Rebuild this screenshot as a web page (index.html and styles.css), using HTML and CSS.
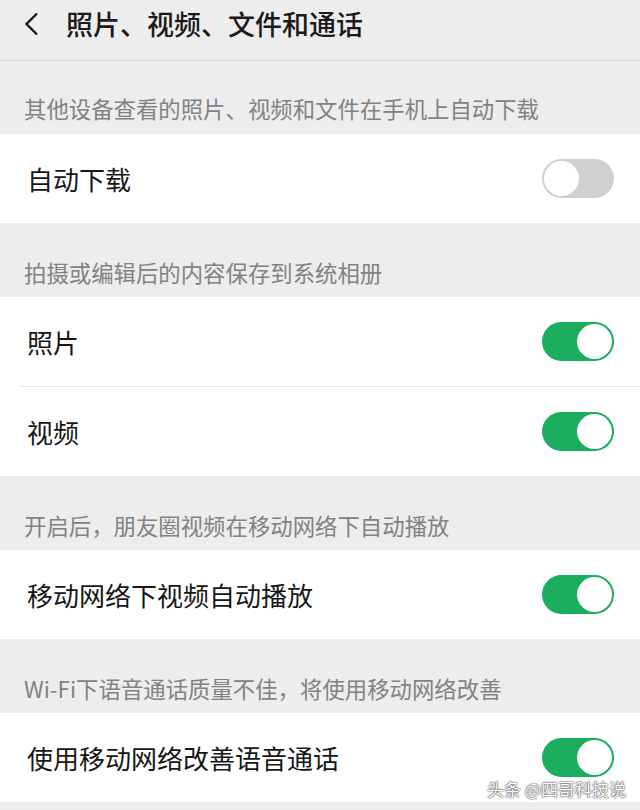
FILE: index.html
```html
<!DOCTYPE html>
<html lang="zh-CN">
  <head>
    <meta charset="UTF-8" />
    <meta name="viewport" content="width=device-width, initial-scale=1.0" />
    <title>照片、视频、文件和通话</title>
    <link rel="stylesheet" href="styles.css">
  </head>
  <body>
    <div class="header">
      <svg class="back" width="16" height="24" viewBox="0 0 16 24">
        <path d="M14 1.5 L3.5 12 L14 22.5" fill="none" stroke="#1a1a1a" stroke-width="2.4" stroke-linejoin="miter" />
      </svg>
      <h1>照片、视频、文件和通话</h1>
    </div>

    <p class="tip">其他设备查看的照片、视频和文件在手机上自动下载</p>
    <div class="group">
      <div class="row">
        <span>自动下载</span>
        <span class="switch"></span>
      </div>
    </div>

    <p class="tip">拍摄或编辑后的内容保存到系统相册</p>
    <div class="group">
      <div class="row">
        <span>照片</span>
        <span class="switch on"></span>
      </div>
      <div class="row">
        <span>视频</span>
        <span class="switch on"></span>
      </div>
    </div>

    <p class="tip">开启后，朋友圈视频在移动网络下自动播放</p>
    <div class="group">
      <div class="row">
        <span>移动网络下视频自动播放</span>
        <span class="switch on"></span>
      </div>
    </div>

    <p class="tip">Wi-Fi下语音通话质量不佳，将使用移动网络改善</p>
    <div class="group">
      <div class="row">
        <span>使用移动网络改善语音通话</span>
        <span class="switch on"></span>
      </div>
    </div>

    <div class="mark">头条 @四哥科技说</div>
  </body>
</html>
```

FILE: styles.css
```css
body {
  margin: 0;
  background: #ededed;
  font-family: "Noto Sans CJK SC", "Noto Sans", sans-serif;
  color: #1a1a1a;
  height: 810px;
  position: relative;
  overflow: hidden;
}
.header {
  height: 61px;
  border-bottom: 1px solid #d9d9d9;
  display: flex;
  align-items: flex-start;
  padding: 8px 0 0 23px;
  box-sizing: border-box;
}
.back {
  margin-top: 4px;
}
h1 {
  margin: 0 0 0 27px;
  font-size: 27px;
  font-weight: 500;
  line-height: 32px;
}
.tip {
  margin: 0;
  height: 74px;
  box-sizing: border-box;
  padding: 35px 0 0 24px;
  font-size: 22.4px;
  line-height: 28px;
  color: #828282;
}
.header + .tip {
  height: 73px;
  padding-top: 33px;
}
.group {
  background: #fff;
}
.row {
  height: 89px;
  display: flex;
  align-items: center;
  justify-content: space-between;
  padding: 0 26px 0 27px;
  font-size: 26px;
  color: #161616;
}
.row + .row {
  border-top: 1px solid #e6e6e6;
  margin-left: 20px;
  padding-left: 7px;
}
.switch {
  width: 72px;
  height: 39px;
  border-radius: 20px;
  background: #d0d0d0;
  box-sizing: border-box;
  padding: 2px;
  display: flex;
}
.switch::after {
  content: "";
  width: 35px;
  height: 35px;
  border-radius: 50%;
  background: #fff;
}
.switch.on {
  background: #1aad5e;
  justify-content: flex-end;
}
.mark {
  position: absolute;
  right: 14px;
  top: 776px;
  font-size: 17px;
  color: #fff;
  text-shadow: 0 0 2px #333, 0 0 1px #333;
}
```
